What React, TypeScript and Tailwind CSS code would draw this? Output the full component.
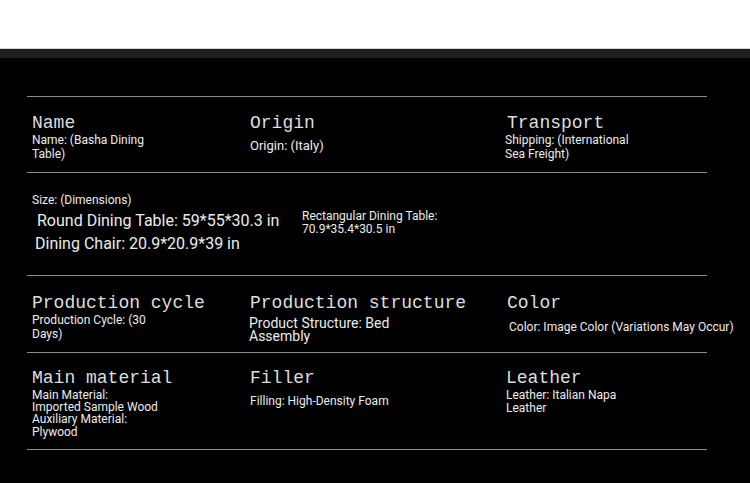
const font = "font-['Roboto',sans-serif] text-[#ececec]"
const head = "font-['Liberation_Mono',monospace] text-[18px] leading-[20px] text-[#dedede]"

function Cell({ title, children, headClass = '' }: { title: string; children: React.ReactNode; headClass?: string }) {
  return (
    <div>
      <div className={`${head} ${headClass}`}>{title}</div>
      {children}
    </div>
  )
}

export default function App() {
  return (
    <div className="w-[750px] h-[483px] overflow-hidden bg-black">
      <div className="h-[48px] bg-white" />
      <div className="h-[10px] bg-[#1e1e1e] border-t border-[#d4d4d4]" />
      <div className="pt-[38px] pl-[27px]">
        <div className="w-[680px] border-t border-[#8c8c8c]">
          {/* row 1 */}
          <div className="h-[76px] grid grid-cols-[218px_255px_1fr] pl-[5px] pt-[16px] border-b border-[#8c8c8c]">
            <Cell title="Name">
              <p className={`${font} text-[12px] leading-[14px]`}>Name: (Basha Dining<br />Table)</p>
            </Cell>
            <Cell title="Origin">
              <p className={`${font} text-[13px] leading-[15px] mt-[5px]`}>Origin: (Italy)</p>
            </Cell>
            <Cell title="Transport" headClass="ml-[2px]">
              <p className={`${font} text-[12px] leading-[14px]`}>Shipping: (International<br />Sea Freight)</p>
            </Cell>
          </div>
          {/* row 2 */}
          <div className="h-[103px] pl-[5px] pt-[20px] border-b border-[#8c8c8c]">
            <p className={`${font} text-[12px] leading-[14px]`}>Size: (Dimensions)</p>
            <div className="flex">
              <div className={`${font} w-[270px] text-[16px] leading-[23px]`}>
                <p className="ml-[5px] mt-[2px]">Round Dining Table: 59*55*30.3 in</p>
                <p className="ml-[3px]">Dining Chair: 20.9*20.9*39 in</p>
              </div>
              <p className={`${font} text-[12px] leading-[13px] mt-[3px]`}>Rectangular Dining Table:<br />70.9*35.4*30.5 in</p>
            </div>
          </div>
          {/* row 3 */}
          <div className="h-[77px] grid grid-cols-[218px_257px_1fr] pl-[5px] pt-[17px] border-b border-[#8c8c8c]">
            <Cell title="Production cycle">
              <p className={`${font} text-[12px] leading-[14px]`}>Production Cycle: (30<br />Days)</p>
            </Cell>
            <Cell title="Production structure">
              <p className={`${font} text-[14px] leading-[13px] mt-[4px] -ml-[1px]`}>Product Structure: Bed<br />Assembly</p>
            </Cell>
            <Cell title="Color">
              <p className={`${font} text-[12px] leading-[14px] mt-[7px] ml-[2px] whitespace-nowrap`}>Color: Image Color (Variations May Occur)</p>
            </Cell>
          </div>
          {/* row 4 */}
          <div className="h-[97px] grid grid-cols-[218px_256px_1fr] pl-[5px] pt-[15px] border-b border-[#8c8c8c]">
            <Cell title="Main material">
              <p className={`${font} text-[12px] leading-[12px] pt-[1px]`}>Main Material:<br />Imported Sample Wood<br />Auxiliary Material:</p>
              <p className={`${font} text-[12px] leading-[14px]`}>Plywood</p>
            </Cell>
            <Cell title="Filler">
              <p className={`${font} text-[12px] leading-[14px] mt-[6px]`}>Filling: High-Density Foam</p>
            </Cell>
            <Cell title="Leather">
              <p className={`${font} text-[12px] leading-[13px] pt-[1px]`}>Leather: Italian Napa<br />Leather</p>
            </Cell>
          </div>
        </div>
      </div>
    </div>
  )
}
